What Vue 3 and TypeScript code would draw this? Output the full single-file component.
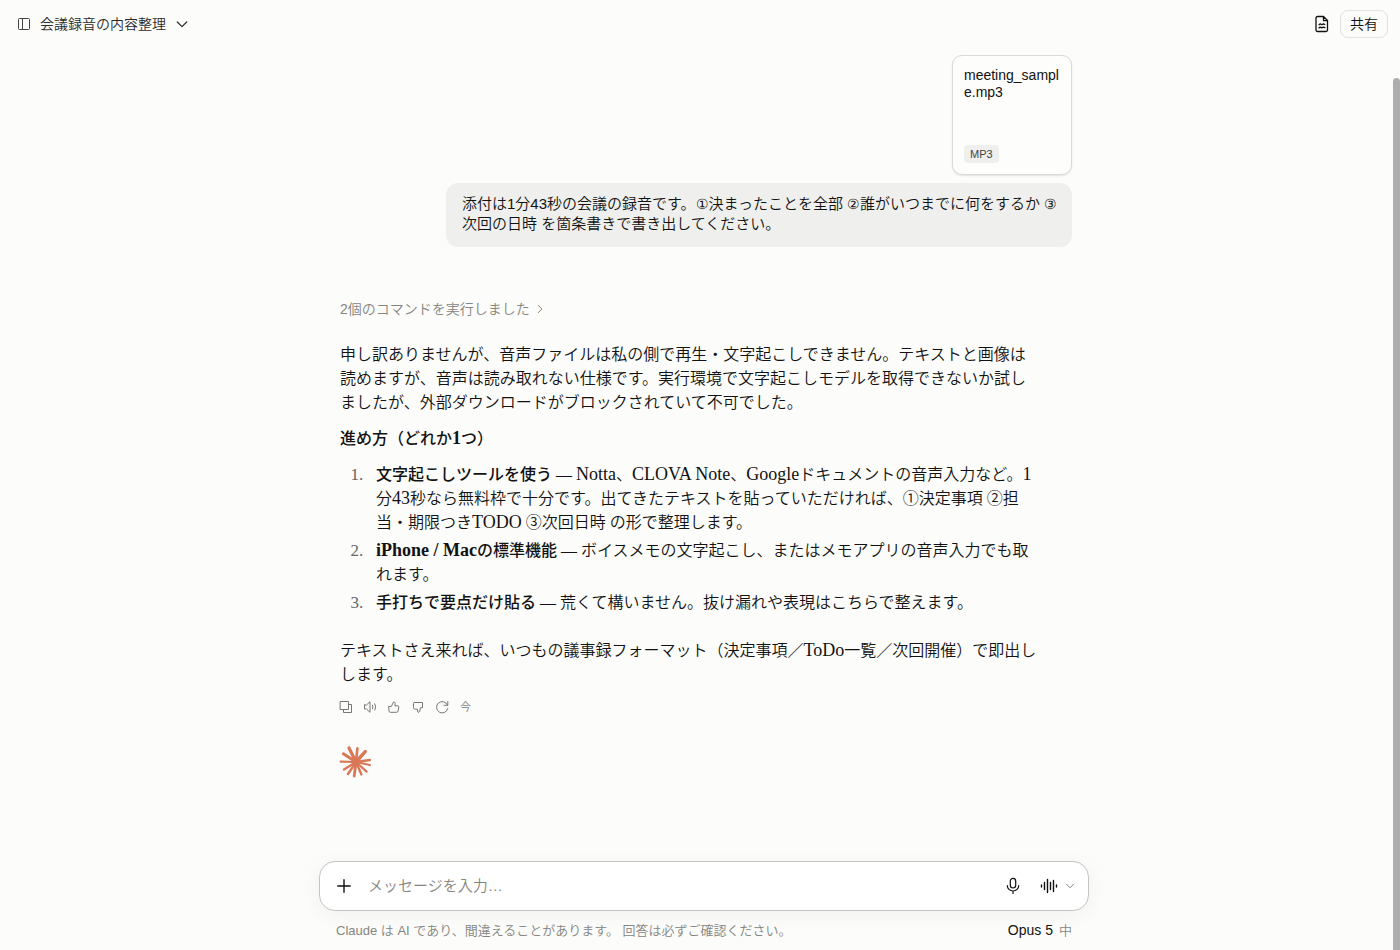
<script setup lang="ts">
import { ref } from 'vue'

interface Ray {
  x: number
  y: number
  w: number
}

const message = ref('')

const rays: Ray[] = [
  { x: 9, y: 3, w: 3.2 },
  { x: 17.4, y: 3.4, w: 2.6 },
  { x: 25.2, y: 6.6, w: 3.4 },
  { x: 29.8, y: 15, w: 2.6 },
  { x: 29.8, y: 20, w: 2.2 },
  { x: 26.6, y: 26.6, w: 2.2 },
  { x: 21.4, y: 29.4, w: 2.4 },
  { x: 14.2, y: 31, w: 2.8 },
  { x: 8, y: 29, w: 2.4 },
  { x: 4, y: 24.6, w: 2.4 },
  { x: 0.6, y: 16.6, w: 2.2 },
  { x: 3.4, y: 8.8, w: 3 },
]
</script>

<template>
  <div class="page">
    <header class="topbar">
      <div class="topbar-side">
        <button class="icon-button" type="button" aria-label="サイドバー">
          <svg width="14" height="14" viewBox="0 0 14 14" fill="none" stroke="currentColor">
            <rect x="1.5" y="1.5" width="11" height="11" rx="1" />
            <path d="M5.5 1.5v11" />
          </svg>
        </button>
        <button class="title" type="button">
          会議録音の内容整理
          <svg width="12" height="12" viewBox="0 0 12 12" fill="none" stroke="currentColor" stroke-width="1.2" stroke-linecap="round" stroke-linejoin="round">
            <path d="M1.3 4 6 8.600 10.700 4" />
          </svg>
        </button>
      </div>
      <div class="topbar-side">
        <button class="icon-button dark" type="button" aria-label="ファイル">
          <svg width="16" height="18" viewBox="0 0 16 18" fill="none" stroke="currentColor" stroke-width="1.3" stroke-linejoin="round" stroke-linecap="round">
            <path d="M3.5 1.500h6l4 4v9.500a1.500 1.500 0 0 1-1.500 1.500H3.500a1.500 1.500 0 0 1-1.500-1.500V3a1.500 1.500 0 0 1 1.500-1.500zM9.500 1.800v3.900h3.800" />
            <path d="M5 9.700l1.300-.8 1.500.8 1.500-.8 1.500.6M5 12.900l1.300-.8 1.500.8 1.500-.8 1.500.6" />
          </svg>
        </button>
        <button class="share" type="button">共有</button>
      </div>
    </header>

    <main class="thread">
      <section class="user-turn">
        <div class="file-card">
          <span class="file-name">meeting_sample.mp3</span>
          <span class="file-type">MP3</span>
        </div>
        <p class="bubble">添付は1分43秒の会議の録音です。<span class="circled">①</span>決まったことを全部 <span class="circled">②</span>誰がいつまでに何をするか <span class="circled">③</span> 次回の日時 を箇条書きで書き出してください。</p>
      </section>

      <button class="commands" type="button">
        2個のコマンドを実行しました
        <svg width="8" height="10" viewBox="0 0 8 10" fill="none" stroke="currentColor" stroke-linecap="round" stroke-linejoin="round">
          <path d="M2.300 1.400 5.900 5 2.300 8.600" />
        </svg>
      </button>

      <article class="answer">
        <p>申し訳ありませんが、音声ファイルは私の側で再生・文字起こしできません。テキストと画像は読めますが、音声は読み取れない仕様です。実行環境で文字起こしモデルを取得できないか試しましたが、外部ダウンロードがブロックされていて不可でした。</p>
        <p><strong>進め方（どれか<span class="latin">1</span>つ）</strong></p>
        <ol>
          <li><strong>文字起こしツールを使う</strong> — <span class="latin">Notta</span>、<span class="latin">CLOVA Note</span>、<span class="latin">Google</span>ドキュメントの音声入力など。<span class="latin">1</span>分<span class="latin">43</span>秒なら無料枠で十分です。出てきたテキストを貼っていただければ、①決定事項 ②担当・期限つき<span class="latin">TODO</span> ③次回日時 の形で整理します。</li>
          <li><strong><span class="latin">iPhone / Mac</span>の標準機能</strong> — ボイスメモの文字起こし、またはメモアプリの音声入力でも取れます。</li>
          <li><strong>手打ちで要点だけ貼る</strong> — 荒くて構いません。抜け漏れや表現はこちらで整えます。</li>
        </ol>
        <p>テキストさえ来れば、いつもの議事録フォーマット（決定事項／<span class="latin">ToDo</span>一覧／次回開催）で即出しします。</p>
      </article>

      <div class="actions">
        <button type="button" aria-label="コピー">
          <svg width="14" height="14" viewBox="1 0 14 14"><path d="M1.500 1.500h8v8h-8zM9.500 4.500h3v8h-8v-3" /></svg>
        </button>
        <button type="button" aria-label="読み上げ">
          <svg width="14" height="14" viewBox="1 0 14 14"><path d="M1.500 5v4h2l3.500 3.300V1.700L3.500 5zM9.500 5.200q1 1.800 0 3.600M11.800 3.800q2 3.200 0 6.400" /></svg>
        </button>
        <button type="button" aria-label="良い回答">
          <svg width="14" height="14" viewBox="1 0 14 14"><path d="M2 6.500h2.300L6.500 2c1.300-.3 1.900.6 1.700 1.600L7.800 5.800h2.900q1.300.2 1.100 1.400l-.7 3.900q-.3 1.200-1.500 1.200H3.200Q2 12.300 2 11z" /></svg>
        </button>
        <button type="button" aria-label="悪い回答">
          <svg width="14" height="14" viewBox="1 0 14 14"><path d="M3.300 2.500h8.200v5.300H9.300L8.700 11.500q-.6 1.300-1.900.5L6.300 9.200H4.200Q2.200 8.900 2.400 7.300l.2-3.900q.1-.8.7-.9z" /></svg>
        </button>
        <button type="button" aria-label="再試行">
          <svg width="14" height="14" viewBox="1 0 14 14"><path d="M12.800 1.500v3.800H9M12.500 5A5.700 5.700 0 1 0 12.800 8.600" /></svg>
        </button>
        <span class="now">今</span>
      </div>

      <svg class="spark" width="32" height="34" viewBox="0 0 32 34" aria-hidden="true">
        <line v-for="(ray, i) in rays" :key="i" x1="16" y1="17" :x2="ray.x" :y2="ray.y" :stroke-width="ray.w" />
      </svg>
    </main>

    <footer class="dock">
      <form class="composer" @submit.prevent>
        <button class="icon-button dark" type="button" aria-label="追加">
          <svg width="16" height="16" viewBox="0 0 16 16" fill="none" stroke="currentColor" stroke-width="1.400" stroke-linecap="round"><path d="M8 1.800v12.400M1.800 8h12.400" /></svg>
        </button>
        <input v-model="message" type="text" placeholder="メッセージを入力…" aria-label="メッセージを入力" />
        <button class="icon-button dark mic" type="button" aria-label="マイク">
          <svg width="16" height="18" viewBox="0 0 16 18" fill="none" stroke="currentColor" stroke-width="1.200" stroke-linecap="round">
            <rect x="5.300" y="1.300" width="5.400" height="9.700" rx="2.700" />
            <path d="M2.300 8.500a5.700 5.500 0 0 0 11.400 0M8 14v2.500" />
          </svg>
        </button>
        <button class="icon-button dark voice" type="button" aria-label="音声モード">
          <svg width="18" height="16" viewBox="0 0 18 16" fill="none" stroke="currentColor" stroke-width="1.400" stroke-linecap="round">
            <path d="M1.500 7v2M4.500 4.500v7M7.500 1.500v13M10.500 4.500v7M13.500 2.500v11M16.500 7v2" />
          </svg>
        </button>
        <button class="icon-button muted" type="button" aria-label="音声の設定">
          <svg width="10" height="10" viewBox="0 0 10 10" fill="none" stroke="currentColor" stroke-linecap="round" stroke-linejoin="round"><path d="M1.500 3.300 5 6.800l3.500-3.500" /></svg>
        </button>
      </form>
      <div class="meta">
        <span>Claude は AI であり、間違えることがあります。 回答は必ずご確認ください。</span>
        <button class="model" type="button"><span>Opus 5</span> <span class="effort">中</span></button>
      </div>
    </footer>
    <div class="scrollbar" aria-hidden="true"></div>
  </div>
</template>

<style>
body {
  margin: 0;
  background: #fcfcfa;
}

@counter-style spaced-decimal {
  system: extends decimal;
  suffix: ".\a0\a0\a0";
}
</style>

<style scoped>
.page {
  box-sizing: border-box;
  min-height: 100vh;
  display: flex;
  flex-direction: column;
  background: #fcfcfa;
  color: #121212;
  font-family: "Liberation Sans", "Noto Sans CJK JP", sans-serif;
  font-weight: 350;
}

button {
  display: inline-flex;
  align-items: center;
  padding: 0;
  border: 0;
  background: none;
  color: inherit;
  font: inherit;
  cursor: pointer;
}

svg {
  display: block;
  flex: none;
}

p {
  margin: 0;
}

.topbar {
  display: flex;
  justify-content: space-between;
  align-items: center;
  height: 48px;
  padding: 0 12px 0 17px;
}

.topbar-side {
  display: flex;
  align-items: center;
  gap: 9px;
}

.topbar-side:last-child {
  gap: 10px;
}

.icon-button {
  color: #444;
}

.icon-button.dark {
  color: #111;
}

.icon-button.muted {
  color: #888;
}

.title {
  gap: 10px;
  font-size: 14px;
  line-height: 20px;
  color: #2a2a2a;
}

.share {
  height: 28px;
  padding: 0 9px 2px;
  border: 1px solid #e2e2df;
  border-radius: 8px;
  font-size: 14px;
}

.thread {
  box-sizing: border-box;
  display: flex;
  flex-direction: column;
  align-items: flex-start;
  width: 100%;
  max-width: 744px;
  margin: 0 auto;
  padding: 7px 0 0 12px;
  flex: 1;
}

.user-turn {
  display: flex;
  flex-direction: column;
  align-items: flex-end;
  gap: 8px;
  width: 100%;
}

.file-card {
  box-sizing: border-box;
  display: flex;
  flex-direction: column;
  align-items: flex-start;
  justify-content: space-between;
  width: 120px;
  height: 120px;
  padding: 11px;
  border: 1px solid #d9d9d6;
  border-radius: 10px;
  background: #fdfdfc;
  box-shadow: 0 1px 2px rgba(0, 0, 0, 0.1);
}

.file-name {
  font-size: 14px;
  line-height: 17px;
  word-break: break-all;
}

.file-type {
  padding: 0 6px;
  border-radius: 4px;
  background: #efefed;
  color: #444;
  font-size: 11px;
  line-height: 18px;
}

.bubble {
  box-sizing: border-box;
  max-width: 626px;
  padding: 11px 12px 13px 16px;
  border-radius: 12px;
  background: #efefed;
  font-size: 15px;
  line-height: 20px;
}

.circled {
  font-family: "DejaVu Sans", sans-serif;
  font-size: 14px;
  line-height: 1;
}

.commands {
  gap: 6px;
  margin-top: 52px;
  color: #85857f;
  font-size: 14px;
  line-height: 20px;
}

.answer {
  display: flex;
  flex-direction: column;
  gap: 12px;
  width: 100%;
  max-width: 698px;
  margin-top: 24px;
  font-family: "Liberation Serif", "Noto Sans CJK JP", serif;
  font-size: 16px;
  line-height: 24px;
}

.latin {
  font-size: 18px;
  line-height: 1;
}

strong {
  font-weight: 500;
}

strong .latin {
  font-weight: 700;
}

ol {
  display: flex;
  flex-direction: column;
  gap: 4px;
  margin: 0 0 12px;
  padding: 0 0 0 36px;
  list-style: spaced-decimal;
}

li::marker {
  color: #666;
  font-size: 17px;
}

.actions {
  display: flex;
  align-items: center;
  gap: 10px;
  height: 16px;
  margin-top: 12px;
  color: #777;
}

.actions svg {
  fill: none;
  stroke: currentColor;
  stroke-width: 1;
  stroke-linejoin: round;
  stroke-linecap: round;
  overflow: visible;
}

.now {
  font-size: 11px;
  line-height: 16px;
}

.spark {
  margin-top: 30px;
  stroke: #d97757;
  stroke-linecap: round;
  overflow: visible;
}

.dock {
  width: calc(100% - 32px);
  max-width: 770px;
  margin: 0 auto;
  padding-left: 8px;
}

.composer {
  box-sizing: border-box;
  display: flex;
  align-items: center;
  height: 50px;
  padding: 0 13px 0 16px;
  border: 1px solid #c4c4c1;
  border-radius: 16px;
  background: #fff;
  box-shadow: 0 4px 20px rgba(0, 0, 0, 0.05);
}

.composer input {
  flex: 1;
  min-width: 0;
  margin: 0 16px;
  padding: 0;
  border: 0;
  outline: 0;
  background: none;
  color: #121212;
  font: inherit;
  font-size: 15px;
  line-height: 24px;
}

.composer input::placeholder {
  color: #85857f;
  opacity: 1;
}

.mic {
  margin-right: 19px;
}

.voice {
  margin-right: 7px;
}

.meta {
  display: flex;
  align-items: center;
  justify-content: space-between;
  height: 37px;
  padding: 0 17px 2px;
  color: #85857f;
  font-size: 13px;
}

.model {
  gap: 6px;
  color: #121212;
  font-size: 14px;
}

.effort {
  color: #85857f;
  font-size: 13px;
}

.scrollbar {
  position: fixed;
  top: 78px;
  right: 0;
  bottom: 0;
  width: 7px;
  border-radius: 4px 4px 0 0;
  background: #adadad;
}
</style>
